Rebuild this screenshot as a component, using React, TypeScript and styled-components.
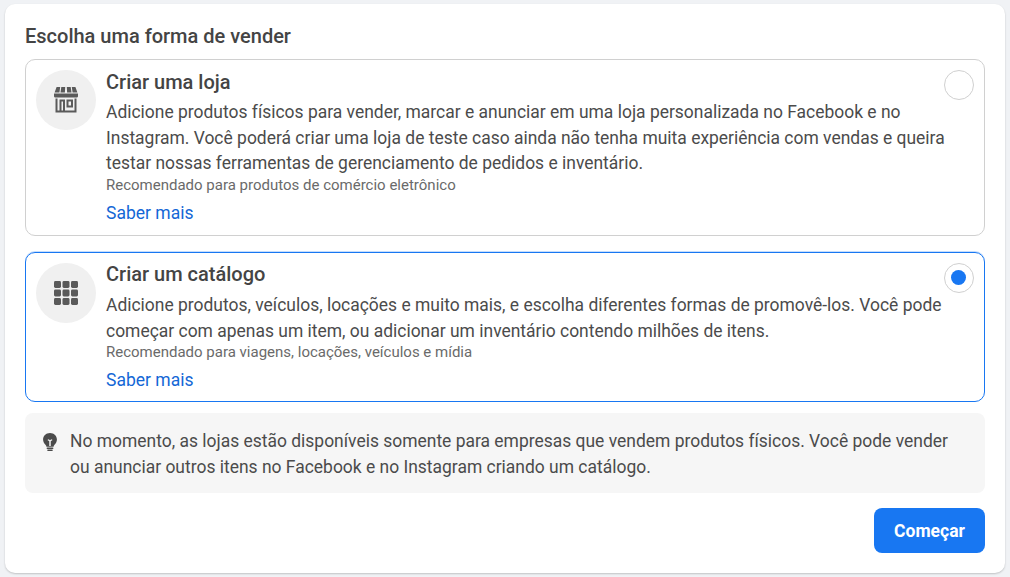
import styled, { createGlobalStyle } from "styled-components";

const GlobalStyle = createGlobalStyle`
  html, body {
    margin: 0;
    padding: 0;
    height: 100%;
    background: #f0f2f5;
    font-family: Roboto, "Liberation Sans", sans-serif;
  }
`;

const Page = styled.div`
  width: 1010px;
  height: 577px;
  box-sizing: border-box;
  padding: 4px 5px;
  overflow: hidden;
`;

const Panel = styled.div`
  height: 569px;
  box-sizing: border-box;
  background: #fff;
  border-radius: 10px;
  box-shadow: 0 1px 2px rgba(0, 0, 0, 0.2);
  padding: 21px 20px 0;
  display: flex;
  flex-direction: column;
`;

const Title = styled.h2`
  margin: 0 0 11px;
  font-size: 20px;
  line-height: 23px;
  font-weight: 500;
  color: #444;
`;

const Option = styled.div<{ $selected?: boolean; $height: number }>`
  position: relative;
  box-sizing: border-box;
  height: ${(p) => p.$height}px;
  border: 1px solid ${(p) => (p.$selected ? "#1877f2" : "#d0d0d0")};
  box-shadow: ${(p) => (p.$selected ? "0 -1px 0 rgba(24, 119, 242, 0.25)" : "none")};
  border-radius: 10px;
  padding: 10px 28px 0 10px;
  display: flex;
  align-items: flex-start;
`;

const IconCircle = styled.div`
  width: 60px;
  height: 60px;
  flex: none;
  border-radius: 50%;
  background: #f0f0f0;
  display: flex;
  align-items: center;
  justify-content: center;
  color: #5a5a5a;
`;

const OptionBody = styled.div`
  flex: 1;
  margin-left: 10px;
  min-width: 0;
`;

const OptionTitle = styled.div<{ $raised?: boolean }>`
  font-size: 20px;
  line-height: 25px;
  font-weight: 500;
  color: #444;
  margin-top: ${(p) => (p.$raised ? "-1px" : "0")};
  margin-bottom: ${(p) => (p.$raised ? "6px" : "5px")};
`;

const Description = styled.div`
  font-size: 17.47px;
  line-height: 25.6px;
  color: #4b4b4b;
`;

const Hint = styled.div`
  margin-top: -1px;
  font-size: 15px;
  line-height: 18px;
  color: #6a6a6a;
`;

const LearnMore = styled.a`
  display: block;
  margin-top: 7px;
  font-size: 17.5px;
  line-height: 24px;
  color: #1467d6;
  text-decoration: none;
`;

const Radio = styled.div`
  position: absolute;
  top: 10px;
  right: 10px;
  width: 30px;
  height: 30px;
  box-sizing: border-box;
  border: 1px solid #d0d0d0;
  border-radius: 50%;
  background: #fff;
  display: flex;
  align-items: center;
  justify-content: center;
`;

const RadioDot = styled.div`
  width: 15px;
  height: 15px;
  margin: -1px 1px 0 0;
  border-radius: 50%;
  background: #1877f2;
`;

const OptionGap = styled.div`
  height: 16px;
  flex: none;
`;

const Notice = styled.div`
  margin-top: 11px;
  height: 80px;
  box-sizing: border-box;
  padding: 15px 20px 0 18px;
  background: #f6f6f6;
  border-radius: 8px;
  display: flex;
  align-items: flex-start;
  gap: 13px;
`;

const NoticeIcon = styled.svg`
  width: 14px;
  height: 18px;
  flex: none;
  margin-top: 5px;
  color: #4b4b4b;
`;

const NoticeText = styled.div`
  font-size: 17.45px;
  line-height: 26px;
  color: #4b4b4b;
`;

const Footer = styled.div`
  margin-top: 15px;
  display: flex;
  justify-content: flex-end;
`;

const StartButton = styled.button`
  width: 111px;
  height: 45px;
  border: none;
  border-radius: 8px;
  background: #1877f2;
  color: #fff;
  font-family: inherit;
  font-size: 17.5px;
  font-weight: 700;
  cursor: pointer;
`;

const ShopIcon = () => (
  <svg width="26" height="28" viewBox="0 0 26 28" fill="currentColor">
    <path d="M3.6 1h3.6L6.4 6.6H1.6L3.6 1zM8.3 1h3.9l-.3 5.6H7.5L8.3 1zM13.8 1h3.9l.8 5.6h-4.4L13.8 1zM18.8 1h3.600l2 5.600h-4.800L18.800 1z" />
    <path d="M1 7.6h24v2.400c0 .9-.8 1.600-1.700 1.600H2.700C1.800 11.600 1 10.900 1 10V7.600z" />
    <path
      fillRule="evenodd"
      d="M2.500 12.600h2v12h17v-12h2V26.600h-21V12.600zM6.500 13.600h5.500v11h-2v-9H8.500v9h-2v-11zM13.500 13.600h6.500v8h-6.500v-8zm2 2v4h2.500v-4h-2.500z"
    />
  </svg>
);

const GridIcon = () => (
  <svg width="24" height="24" viewBox="0 0 24 24" fill="currentColor">
    {[0, 8.5, 17].flatMap((y) =>
      [0, 8.5, 17].map((x) => <rect key={`${x}-${y}`} x={x} y={y} width="7" height="7" rx="1.4" />),
    )}
  </svg>
);

const BulbIcon = () => (
  <NoticeIcon viewBox="1 1 15 19.5" fill="currentColor">
    <path
      fillRule="evenodd"
      d="M8.5 1C4.2 1 1 4.1 1 8c0 2.4 1.2 4.2 2.6 5.6.7.7 1 1.4 1 2.2h7.8c0-.8.3-1.5 1-2.2C14.8 12.2 16 10.4 16 8c0-3.9-3.2-7-7.5-7zM5.700 8.500l1.300-.7 1.500 1 1.500-1 1.300.7-2 1.500v5H7.700v-5l-2-1.500z"
    />
    <rect x="4.8" y="16.8" width="7.4" height="1.5" rx="0.7" />
    <rect x="5.5" y="19" width="6" height="1.5" rx="0.7" />
  </NoticeIcon>
);

export default function App() {
  return (
    <Page>
      <GlobalStyle />
      <Panel>
        <Title>Escolha uma forma de vender</Title>
        <Option $height={177}>
          <IconCircle>
            <ShopIcon />
          </IconCircle>
          <OptionBody>
            <OptionTitle>Criar uma loja</OptionTitle>
            <Description>
              Adicione produtos físicos para vender, marcar e anunciar em uma loja personalizada no Facebook e no
              Instagram. Você poderá criar uma loja de teste caso ainda não tenha muita experiência com vendas e queira
              testar nossas ferramentas de gerenciamento de pedidos e inventário.
            </Description>
            <Hint>Recomendado para produtos de comércio eletrônico</Hint>
            <LearnMore href="#">Saber mais</LearnMore>
          </OptionBody>
          <Radio />
        </Option>
        <OptionGap />
        <Option $selected $height={150}>
          <IconCircle>
            <GridIcon />
          </IconCircle>
          <OptionBody>
            <OptionTitle $raised>Criar um catálogo</OptionTitle>
            <Description>
              Adicione produtos, veículos, locações e muito mais, e escolha diferentes formas de promovê-los. Você pode
              começar com apenas um item, ou adicionar um inventário contendo milhões de itens.
            </Description>
            <Hint>Recomendado para viagens, locações, veículos e mídia</Hint>
            <LearnMore href="#">Saber mais</LearnMore>
          </OptionBody>
          <Radio>
            <RadioDot />
          </Radio>
        </Option>
        <Notice>
          <BulbIcon />
          <NoticeText>
            No momento, as lojas estão disponíveis somente para empresas que vendem produtos físicos. Você pode vender
            ou anunciar outros itens no Facebook e no Instagram criando um catálogo.
          </NoticeText>
        </Notice>
        <Footer>
          <StartButton>Começar</StartButton>
        </Footer>
      </Panel>
    </Page>
  );
}
